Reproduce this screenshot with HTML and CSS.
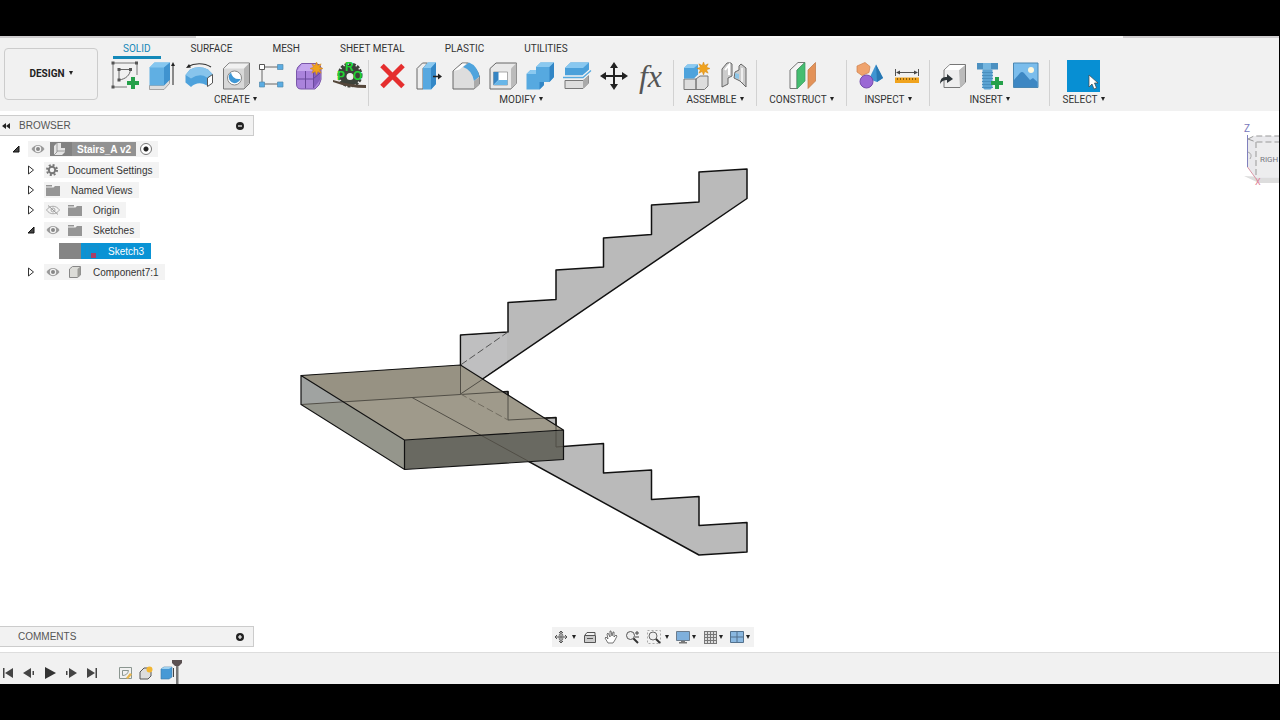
FILE: index.html
```html
<!DOCTYPE html>
<html lang="en">
<head>
<meta charset="utf-8">
<meta name="viewport" content="width=device-width, initial-scale=1">
<title>Stairs_A v2</title>
<link rel="stylesheet" href="styles.css">
</head>
<body>
<svg class="defs" aria-hidden="true">
  <defs>
    <symbol id="star" viewBox="0 0 14 14"><path d="M7 0l1.4 3.7L12 2l-1.7 3.6L14 7l-3.700 1.400L12 12l-3.600-1.700L7 14l-1.400-3.700L2 12l1.700-3.600L0 7l3.700-1.400L2 2l3.600 1.700z" fill="#f0a21c" stroke="#cf8310" stroke-width=".5"/></symbol>
    <symbol id="plus" viewBox="0 0 12 12"><path d="M4 0h4v4h4v4H8v4H4V8H0V4h4z" fill="#25a04a"/></symbol>
    <symbol id="eye" viewBox="0 0 14 10"><path d="M.5 5C4-.5 10-.5 13.500 5 10 10.500 4 10.500.500 5z" fill="#999"/><circle cx="7" cy="5" r="3.200" fill="#f3f3f3"/><circle cx="7" cy="5" r="2" fill="#888"/></symbol>
    <symbol id="folder" viewBox="0 0 14 12"><path d="M0 1h6v1.500H0zM0 3.500h7.500l1.500-1.500h5V12H0z" fill="#969696"/></symbol>
    <symbol id="closed" viewBox="0 0 8 10"><path d="M1.500 1v8L6.500 5z" fill="#fff" stroke="#333"/></symbol>
    <symbol id="open" viewBox="0 0 8 8"><path d="M7 1v6H1z" fill="#444" stroke="#111"/></symbol>
  </defs>
</svg>
<div class="app">
  <div class="title-edge"><span class="edge-left"></span><span class="edge-right"></span></div>
  <header class="ribbon">
    <button class="workspace" type="button">DESIGN <i class="caret"></i></button>
    <div class="ribbon-body">
      <nav class="tabs" aria-label="Toolbar tabs">
        <button class="tab active" type="button">SOLID</button>
        <button class="tab" type="button">SURFACE</button>
        <button class="tab" type="button">MESH</button>
        <button class="tab" type="button">SHEET METAL</button>
        <button class="tab" type="button">PLASTIC</button>
        <button class="tab" type="button">UTILITIES</button>
      </nav>
      <div class="groups">
        <section class="group">
          <div class="tools">
            <button class="tool" type="button" aria-label="Create sketch"><svg class="icon" viewBox="0 0 32 32"><path d="M4 3h24v12M4 3v24h14" fill="none" stroke="#777"/><path d="M10 9.500h11.500C21 15 17 19 10 20z" fill="none" stroke="#666"/><g fill="#555"><path d="M2.500 1.500h3v3h-3zM26 1.500h3v3h-3zM2.500 25.500h3v3h-3zM8.500 8h3v3h-3zM20 8h3v3h-3zM8.500 18.500h3v3h-3z"/></g><use href="#plus" x="18" y="17" width="12" height="12"/></svg></button>
            <button class="tool" type="button" aria-label="Extrude"><svg class="icon" viewBox="0 0 32 32"><path d="M3.500 25.500h14l6-6v4l-5.500 6H3.500z" fill="#ddd" stroke="#888" stroke-width=".7"/><path d="M3.500 7.500l5-5H24v17l-6 6H3.500z" fill="#60afe3"/><path d="M3.500 7.500l5-5H24l-6 5z" fill="#85c7f0"/><path d="M18 7.500l6-5v17l-6 6z" fill="#3f93cf"/><path d="M27 5v20" stroke="#222"/><path d="M27 2l2 4h-4z" fill="#222"/></svg></button>
            <button class="tool" type="button" aria-label="Revolve"><svg class="icon" viewBox="0 0 32 32"><path d="M5 6.500C11 3 21 2.500 28 7" fill="none" stroke="#333" stroke-width="1.200"/><path d="M3 8l3-4 2 3.500z" fill="#222"/><path d="M2.500 15L7 9.500q9-4.500 18 0l5 5-6 5v6q-9-5-16 1.500l-5.500-4.500z" fill="#4ea2dc"/><path d="M2.500 15L7 9.500q9-4.500 18 0l5 5-6 3q-7-5-16 1z" fill="#87c4ec"/><path d="M24.500 18l5-3.500v8.500l-5 3.500z" fill="#fff" stroke="#555"/></svg></button>
            <button class="tool" type="button" aria-label="Hole"><svg class="icon" viewBox="0 0 32 32"><path d="M3.500 8.500L9 3h20.500v20.500L24 29H3.500z" fill="#d8d8d8" stroke="#777"/><path d="M4 8.500L9 3.500h20L24 8.500z" fill="#f1f1f1"/><path d="M24 8.500l5-5V23l-5 5.500z" fill="#b5b5b5"/><circle cx="14.500" cy="18" r="7" fill="#fff" stroke="#888"/><path d="M11 12.500a6 6 0 1 0 9.500 6.500q-8 1-9.500-6.500z" fill="#3f98d6"/></svg></button>
            <button class="tool" type="button" aria-label="Pattern"><svg class="icon" viewBox="0 0 32 32"><path d="M5 7h18M5 7v17h18" fill="none" stroke="#666"/><path d="M2.500 4.500h5v5h-5z" fill="#fff" stroke="#555"/><path d="M20.500 4.500h5.500v5h-5.500zM2.500 22h5v5h-5zM20.500 22h5.500v5h-5.500z" fill="#5bace2" stroke="#5289ad" stroke-width=".7"/></svg></button>
            <button class="tool" type="button" aria-label="Create form"><svg class="icon" viewBox="0 0 32 32"><path d="M2.500 11q0-4 5-7.500H22q5 1 5 4v12q-1 6-6 9.500H7q-4.500 0-4.500-5z" fill="#aa83dc" stroke="#7a57aa"/><path d="M3 11l5-7h14l-4 7z" fill="#c6a7ee"/><path d="M20 11l6-5v14l-6 8z" fill="#865fbf"/><path d="M3 19h16l7-6M11.500 11v17.500M19.500 11v17" fill="none" stroke="#69489b"/><use href="#star" x="16" y="2" width="13" height="13"/></svg></button>
            <button class="tool" type="button" aria-label="Nesting"><svg class="icon" viewBox="0 0 32 32"><circle cx="19" cy="15" r="10.500" fill="#3d423b" stroke="#3d423b" stroke-width="4" stroke-dasharray="2.700 1.300"/><circle cx="19" cy="16.500" r="3.500" fill="#eee"/><path d="M2 20q16 5 33 5v3Q18 28 2 22z" fill="#54463a"/><g class="saw-text"><text x="6" y="20">P</text><text x="14" y="11">R</text><text x="22" y="20">O</text></g></svg></button>
          </div>
          <button class="group-label" type="button">CREATE <i class="caret"></i></button>
        </section>
        <section class="group">
          <div class="tools">
            <button class="tool" type="button" aria-label="Delete"><svg class="icon" viewBox="0 0 32 32"><path d="M6 5.500l21 21M27 5.500l-21 21" stroke="#e52e2e" stroke-width="5"/></svg></button>
            <button class="tool" type="button" aria-label="Press pull"><svg class="icon" viewBox="0 0 32 32"><path d="M4 8.500L9.500 3h5L10 8.500V29H4z" fill="#eee" stroke="#666"/><path d="M10 8l5-5.500h8V24l-5 5.500h-8z" fill="#57a8e0"/><path d="M10 8l5-5.500h8L18 8z" fill="#8bc9f0"/><path d="M18 8l5-5.500V24l-5 5.500z" fill="#3488c7"/><path d="M20 16.500h6" stroke="#222" stroke-width="1.500"/><path d="M29 16.500l-4-3v6z" fill="#222"/></svg></button>
            <button class="tool" type="button" aria-label="Fillet"><svg class="icon" viewBox="0 0 32 32"><path d="M3 11l9-8h6q9 4 11.500 14v7L24 29H3z" fill="#ddd" stroke="#666"/><path d="M3.500 11l9-7.500h4l-7 6z" fill="#fff"/><path d="M13 7l6-4.500q8 3 10.500 14L24 21Q22 10 13 7z" fill="#4fa4dd"/><path d="M24 21l5.500-4v7L24 29z" fill="#aaa"/></svg></button>
            <button class="tool" type="button" aria-label="Shell"><svg class="icon" viewBox="0 0 32 32"><path d="M3 8.500L9 3h20.500v20L24 29H3z" fill="#e9e9e9" stroke="#666"/><path d="M24 8.500L29.500 3v20L24 29z" fill="#bbb"/><path d="M6.500 12h14v13h-14z" fill="#fff" stroke="#888" stroke-width=".7"/><path d="M6.500 12h5v8l-5 5z" fill="#3685c3"/><path d="M11.500 20h9v5h-14z" fill="#68b6e8"/></svg></button>
            <button class="tool" type="button" aria-label="Combine"><svg class="icon" viewBox="0 0 32 32"><path d="M2.500 14l4-4H12V7l4.500-4.500H30V17l-4.500 5H20v3l-4.500 4.500h-13z" fill="#56a9e0"/><path d="M2.500 14l4-4H12v4zM12 7l4.500-4.500H30L25.500 7z" fill="#8ac9f0"/><path d="M25.500 7L30 2.500V17l-4.500 5zM15.500 22H20v3l-4.500 4.500z" fill="#3286c5"/></svg></button>
            <button class="tool" type="button" aria-label="Split body"><svg class="icon" viewBox="0 0 32 32"><path d="M4 8l5.500-5.500H28V10l-6 5.500H4z" fill="#4ba0da"/><path d="M4 8l5.500-5.500H28L22 8z" fill="#89c8f0"/><path d="M4 20.500h18l5.500-5V23L22 28.500H4z" fill="#ddd" stroke="#777"/><path d="M22 20.500l5.500-5V23L22 28.500z" fill="#aaa"/><path d="M2 17.500h20l8-7" fill="none" stroke="#f1f1f1" stroke-width="4"/><path d="M2 17.500h20l8-7" fill="none" stroke="#55a9df" stroke-width="1.300"/></svg></button>
            <button class="tool" type="button" aria-label="Move"><svg class="icon" viewBox="0 0 32 32"><path d="M16 5v22M5 16h22" stroke="#222" stroke-width="2"/><path d="M16 2l4 6h-8zM16 30l4-6h-8zM2 16l6-4v8zM30 16l-6-4v8z" fill="#222"/></svg></button>
            <button class="tool fx" type="button" aria-label="Change parameters">fx</button>
          </div>
          <button class="group-label" type="button">MODIFY <i class="caret"></i></button>
        </section>
        <section class="group">
          <div class="tools">
            <button class="tool" type="button" aria-label="New component"><svg class="icon" viewBox="0 0 32 32"><path d="M3 19h12v10.500H3zM15 19l4-3h8v10l-3.500 3.500H15z" fill="#ddd" stroke="#777"/><path d="M3 8l3.500-3.500H17v10L13 18.500H3z" fill="#4ea3dc"/><path d="M3 8l3.500-3.500H17L13 8z" fill="#8bcaf1"/><use href="#star" x="16" y="2" width="13" height="13"/></svg></button>
            <button class="tool" type="button" aria-label="Joint"><svg class="icon" viewBox="0 0 32 32"><path d="M4 27V9l5-6q4-1 5 1v12l-4 2v6z" fill="#ccc" stroke="#666"/><path d="M7 10l4-5v10" fill="none" stroke="#fff" stroke-width="2"/><path d="M28 27V8l-5-4-2 2v4l-4 2-1 6 6 3z" fill="#ccc" stroke="#666"/><path d="M17 13l4 1v5l-4-1z" fill="#8ec6e7"/><path d="M24 8v14" stroke="#eee" stroke-width="2"/></svg></button>
          </div>
          <button class="group-label" type="button">ASSEMBLE <i class="caret"></i></button>
        </section>
        <section class="group construct">
          <div class="tools">
            <button class="tool" type="button" aria-label="Offset plane"><svg class="icon" viewBox="0 0 32 32"><path d="M4 10l8-7.500h7l-8 7.500v18.500H4z" fill="#f4f4f4" stroke="#777"/><path d="M11 10l8-7.500V21l-8 8z" fill="#45bd70" stroke="#3b9c5e" stroke-width=".7"/><path d="M22 10l7.500-7.500V21L22 28.500z" fill="#e39258" stroke="#bf7744" stroke-width=".7"/></svg></button>
          </div>
          <button class="group-label" type="button">CONSTRUCT <i class="caret"></i></button>
        </section>
        <section class="group">
          <div class="tools">
            <button class="tool" type="button" aria-label="Interference"><svg class="icon" viewBox="0 0 32 32"><path d="M3 6l8-3.500 5 4-1 6-7 3L3 12z" fill="#efa36d" stroke="#cd7f4b" stroke-width=".7"/><path d="M22 4.500L29 18l-6 4-8-3z" fill="#3f94d1"/><path d="M22 4.500L29 18l-6 4z" fill="#2877b2"/><circle cx="12.500" cy="21.500" r="6.500" fill="#9a68d5" stroke="#744aab"/></svg></button>
            <button class="tool" type="button" aria-label="Measure"><svg class="icon" viewBox="0 0 32 32"><path d="M4.500 9v7M27.500 9v7M6 12.500h20" stroke="#555"/><path d="M5 12.500l4-2v4zM27 12.500l-4-2v4z" fill="#444"/><path d="M4 17.500h24V23H4z" fill="#f0a31d"/><path d="M6.500 18v2M9.500 18v2M12.500 18v2M15.500 18v2M18.500 18v2M21.500 18v2M24.500 18v2" stroke="#8a6010"/></svg></button>
          </div>
          <button class="group-label" type="button">INSPECT <i class="caret"></i></button>
        </section>
        <section class="group">
          <div class="tools">
            <button class="tool" type="button" aria-label="Insert derive"><svg class="icon" viewBox="0 0 32 32"><path d="M7 10l6-5.500h15.500V22L23 27.500H7z" fill="#eee" stroke="#777"/><path d="M22 10l6-5v17l-5 5z" fill="#bbb"/><path d="M7.500 10l5.500-5h15l-6 5z" fill="#fff"/><path d="M3 24q0-8 7-7v-3l6 5-6 4v-3q-5 0-7 4z" fill="#2d3438"/></svg></button>
            <button class="tool" type="button" aria-label="Insert fastener"><svg class="icon" viewBox="0 0 32 32"><path d="M3 3h21v6.500H3z" fill="#4c91c1"/><path d="M9 3h8v6.500H9z" fill="#75b6df"/><path d="M8.500 9.500h10v18l-2 2h-6l-2-2z" fill="#5ca3d2"/><path d="M8 12.500h11M8 15.500h11M8 18.500h11M8 21.500h11M8 24.500h11M8 27.500h11" stroke="#4a8fbe"/><use href="#plus" x="17" y="17" width="12" height="12"/></svg></button>
            <button class="tool" type="button" aria-label="Insert canvas"><svg class="icon" viewBox="0 0 32 32"><path d="M2.500 3h24.500v24.500H2.500z" fill="#7bbdec" stroke="#4a87b2"/><path d="M3 20l6-7q2-2 4 0l6 7 3-2 4.500 4v5H3z" fill="#3d87c3"/><circle cx="20" cy="10" r="3" fill="#fff8dc"/></svg></button>
          </div>
          <button class="group-label" type="button">INSERT <i class="caret"></i></button>
        </section>
        <section class="group select">
          <div class="tools">
            <button class="tool selected" type="button" aria-label="Select"><svg class="icon" viewBox="0 0 32 32"><path d="M21 15v12l3-3 2 5 2.500-1-2-5H30z" fill="#fff" stroke="#444" stroke-width=".7"/></svg></button>
          </div>
          <button class="group-label" type="button">SELECT <i class="caret"></i></button>
        </section>
      </div>
    </div>
  </header>

  <main class="workspace-area">
    <svg class="scene" role="img" aria-label="Staircase sketch with landing">
      <g transform="translate(0 -111)">
        <g fill="#bababa" stroke="#111" stroke-width="1.500" stroke-linejoin="round">
          <path d="M747 169L699 172V202L651.500 205V234.500L603.500 238V267L556 270V299.500L508 302.500V332L460.500 335V394L747 198.500Z"/>
          <path d="M460.500 394L508 391.500V420L556 417.500V447L603.500 443.500V473L651.500 470V499.500L699 496.500V525.500L747 522.500V552L699 555L412 397.500Z"/>
        </g>
        <path d="M461.500 336L507 333V361L483 377.500L461.500 364Z" fill="#bfbfc0"/>
        <path d="M508 332L460.500 365" stroke="#555" stroke-dasharray="7 3" fill="none"/>
        <path d="M301 375.500L460.500 365L563.500 430L404.500 440Z" fill="#9f9a8b"/>
        <path d="M301 375.500L460.500 365V394L345 402.500Z" fill="#979283"/>
        <path d="M301 375.500L404.500 440V469.500L301 404.500Z" fill="#95968c"/>
        <path d="M301 375.500L345 402.500L301 404.500Z" fill="#a0a3a1"/>
        <path d="M404.500 440L563.500 430V459.500L404.500 469.500Z" fill="#696961"/>
        <path d="M301 404.500L508 391.500V420L556 417.500V447L563 446.500M412 397.500L528 461M460.500 365V394L483 379" fill="none" stroke="#514e46"/>
        <path d="M460.500 394L508 420" fill="none" stroke="#716c60" stroke-dasharray="7 3"/>
        <path d="M503 391.800L508 391.500V395M546 418L556 417.500V425" fill="none" stroke="#111"/>
        <path d="M301 375.500L460.500 365L563.500 430V459.500L404.500 469.500L301 404.500ZL404.500 440V469.500M404.500 440L563.500 430" fill="none" stroke="#111" stroke-width="1.200"/>
      </g>
    </svg>
    <svg class="viewcube" viewBox="0 0 40 68" aria-label="View cube">
      <path d="M5 55l15 7h20v-5z" fill="#ddd"/>
      <path d="M9 18l7-3h24v42H17L9 46z" fill="#e9e9ec"/>
      <path d="M17 21h23v35H17z" fill="#ededee"/>
      <path d="M9 18l8 3h23M17 21v35M9 18l6-3h25" fill="none" stroke="#999" stroke-dasharray="6 3"/>
      <path d="M8.500 14v32" stroke="#8080bd"/><path d="M8.500 46l8 11" stroke="#d995a5"/>
      <path d="M9 31q5 2 2 7" fill="none" stroke="#aaa"/>
      <text class="axis-z" x="5" y="11">Z</text><text class="axis-x" x="16" y="64">X</text><text class="face" x="21" y="41">RIGH</text>
    </svg>
    <aside class="browser">
      <div class="panel">
        <button class="panel-collapse" type="button" aria-label="Collapse browser"><svg class="rewind" viewBox="0 0 8 6"><path d="M4 0v6L0 3zM8 0v6L4 3z" fill="#222"/></svg></button>
        <h2 class="panel-title">BROWSER</h2>
        <button class="panel-toggle" type="button" aria-label="Minimise browser"><svg class="dot" viewBox="0 0 8 8"><circle cx="4" cy="4" r="4" fill="#222"/><path d="M2 4h4" stroke="#fff" stroke-width="1.200"/></svg></button>
      </div>
      <ul class="tree">
        <li>
          <div class="row root"><svg class="arrow" viewBox="0 0 8 8"><use href="#open"/></svg>
            <div class="chip"><svg class="eye" viewBox="0 0 14 10"><use href="#eye"/></svg><span class="doc-name"><svg class="doc-icon" viewBox="0 0 22 14"><path d="M0 0h22v14H0z" fill="#828282"/><path d="M4 4l3-3h4v5h4v4l-3 3H4z" fill="#e4e4e4"/><path d="M7 1v9l-3 3M7 9h8" fill="none" stroke="#888" stroke-width=".8"/></svg><b>Stairs_A v2</b></span><input class="activate" type="radio" name="active" checked aria-label="Activate Stairs_A v2"></div>
          </div>
          <ul class="branch">
            <li class="row"><svg class="arrow" viewBox="0 0 8 10"><use href="#closed"/></svg><div class="chip"><svg class="gear" viewBox="0 0 12 12"><circle cx="6" cy="6" r="3.200" fill="none" stroke="#777" stroke-width="2"/><circle cx="6" cy="6" r="5" fill="none" stroke="#777" stroke-width="2" stroke-dasharray="2 1.930"/></svg><span class="name wide">Document Settings</span></div></li>
            <li class="row"><svg class="arrow" viewBox="0 0 8 10"><use href="#closed"/></svg><div class="chip"><svg class="folder" viewBox="0 0 14 12"><use href="#folder"/></svg><span class="name">Named Views</span></div></li>
            <li class="row"><svg class="arrow" viewBox="0 0 8 10"><use href="#closed"/></svg><div class="chip"><svg class="eye" viewBox="0 0 14 10"><path d="M.5 5C4 0 10 0 13.500 5 10 10 4 10 .5 5z" fill="none" stroke="#aaa"/><circle cx="7" cy="5" r="2" fill="none" stroke="#aaa"/><path d="M2 .5l10 9" stroke="#999"/></svg><svg class="folder" viewBox="0 0 14 12"><use href="#folder"/></svg><span class="name">Origin</span></div></li>
            <li>
              <div class="row"><svg class="arrow" viewBox="0 0 8 8"><use href="#open"/></svg><div class="chip"><svg class="eye" viewBox="0 0 14 10"><use href="#eye"/></svg><svg class="folder" viewBox="0 0 14 12"><use href="#folder"/></svg><span class="name">Sketches</span></div></div>
              <ul class="leaf"><li class="row"><div class="chip picked"><span class="swatch"></span><svg class="sketch-icon" viewBox="0 0 22 16"><path d="M4 3h13v10H4zM8 3v10" fill="none" stroke="#1c8cc4"/><path d="M10 10h5v5h-5z" fill="#a93e68"/></svg><span class="name">Sketch3</span></div></li></ul>
            </li>
            <li class="row"><svg class="arrow" viewBox="0 0 8 10"><use href="#closed"/></svg><div class="chip"><svg class="eye" viewBox="0 0 14 10"><use href="#eye"/></svg><svg class="folder" viewBox="0 0 14 14"><path d="M1.500 4l3-2.500h8V10l-3 2.500h-8z" fill="#dcdcd8" stroke="#888"/><path d="M9.500 4l3-2.500V10l-3 2.500z" fill="#9c9c98"/></svg><span class="name">Component7:1</span></div></li>
          </ul>
        </li>
      </ul>
    </aside>
    <div class="bottom">
      <div class="panel">
        <h2 class="panel-title comments">COMMENTS</h2>
        <button class="panel-toggle" type="button" aria-label="Expand comments"><svg class="dot" viewBox="0 0 8 8"><circle cx="4" cy="4" r="4" fill="#222"/><path d="M2 4h4M4 2v4" stroke="#fff" stroke-width="1.200"/></svg></button>
      </div>
      <nav class="navbar" aria-label="View navigation">
        <button class="nav drop" type="button" aria-label="Orbit"><svg class="nav-icon" viewBox="0 0 14 14"><path d="M7 1v12M5 3l2-2 2 2M5 11l2 2 2-2M1 7h12M3 5L1 7l2 2M11 5l2 2-2 2" fill="none" stroke="#555"/><ellipse cx="7" cy="7" rx="2" ry="4" fill="none" stroke="#777"/></svg><i class="caret"></i></button>
        <button class="nav" type="button" aria-label="Look at"><svg class="nav-icon" viewBox="0 0 14 14"><path d="M1.500 5.500h11v7h-11z" fill="#ccc" stroke="#555"/><path d="M2 5l2-2.500h8v2.500M4 8.500h6" fill="none" stroke="#555"/></svg></button>
        <button class="nav" type="button" aria-label="Pan"><svg class="nav-icon" viewBox="0 0 14 14"><path d="M4 13L1 8l1-1 2 2-1-5 1-1 2 4V1h1l1 5 1-4h1v5l2-2 1 1-2 4-2 3z" fill="#fff" stroke="#555" stroke-width=".8"/></svg></button>
        <button class="nav" type="button" aria-label="Zoom"><svg class="nav-icon" viewBox="0 0 14 14"><circle cx="5.500" cy="5.500" r="4" fill="#eee" stroke="#555"/><path d="M8.500 8.500l4.500 4.500" stroke="#333" stroke-width="2"/><path d="M10 3h4M12 1v4M10 7h4" stroke="#444"/></svg></button>
        <button class="nav drop" type="button" aria-label="Fit"><svg class="nav-icon" viewBox="0 0 14 14"><path d="M.5.5h13v13H.5z" fill="none" stroke="#aaa" stroke-dasharray="2 2"/><circle cx="6" cy="6" r="4" fill="#eee" stroke="#666"/><path d="M9 9l4 4" stroke="#333" stroke-width="2"/></svg><i class="caret"></i></button>
        <button class="nav drop" type="button" aria-label="Display settings"><svg class="nav-icon" viewBox="0 0 14 14"><path d="M.5 1.500h13v9H.5z" fill="#7fb0dc" stroke="#6b7c8d"/><path d="M5 11h4v1h2v1.500H3V12h2z" fill="#777"/></svg><i class="caret"></i></button>
        <button class="nav drop" type="button" aria-label="Grid and snaps"><svg class="nav-icon" viewBox="0 0 14 14"><path d="M1 1h12v12H1z" fill="#ddd"/><path d="M1 1.500h13M1 4.500h13M1 7.500h13M1 10.500h13M1 13.500h13M1.500 1v13M4.500 1v13M7.500 1v13M10.500 1v13M13.500 1v13" stroke="#777"/></svg><i class="caret"></i></button>
        <button class="nav drop" type="button" aria-label="Viewports"><svg class="nav-icon" viewBox="0 0 14 14"><path d="M.5 1.500h13v11H.5z" fill="#8ab8e0" stroke="#53718d"/><path d="M7 2v10M1 7h12" stroke="#53718d"/></svg><i class="caret"></i></button>
      </nav>
    </div>
  </main>

  <footer class="timeline">
    <div class="playback">
      <button class="play" type="button" aria-label="Go to start"><svg class="play-icon" viewBox="0 0 12 12"><path d="M1 1h1.500v10H1zM11 1v10L3 6z" fill="#444"/></svg></button>
      <button class="play" type="button" aria-label="Step back"><svg class="play-icon" viewBox="0 0 12 12"><path d="M8 1v10L0 6zM9.500 4H11v4H9.500z" fill="#444"/></svg></button>
      <button class="play" type="button" aria-label="Play"><svg class="play-icon" viewBox="0 0 12 12"><path d="M1 0v12L12 6z" fill="#333"/></svg></button>
      <button class="play" type="button" aria-label="Step forward"><svg class="play-icon" viewBox="0 0 12 12"><path d="M4 1v10l8-5zM1 4h1.500v4H1z" fill="#444"/></svg></button>
      <button class="play" type="button" aria-label="Go to end"><svg class="play-icon" viewBox="0 0 12 12"><path d="M1 1v10l8-5zM9.500 1H11v10H9.500z" fill="#444"/></svg></button>
    </div>
    <div class="features">
      <button class="play" type="button" aria-label="Sketch feature"><svg class="feature-icon" viewBox="0 0 16 16"><path d="M2.500 2.500h12v11h-12zM5.500 5.500h6q-1 5-6 5z" fill="none" stroke="#8b9690"/><path d="M9 13l4-5 2 1.500-4 4.500z" fill="#e8b64e"/></svg></button>
      <button class="play" type="button" aria-label="Component feature"><svg class="feature-icon" viewBox="0 0 16 16"><path d="M2 7l4-4h4l3 4v4l-3 3H2z" fill="#ddd" stroke="#555"/><circle cx="11.500" cy="4.500" r="3" fill="#f2b632"/></svg></button>
      <button class="play" type="button" aria-label="Extrude feature"><svg class="feature-icon" viewBox="0 0 16 16"><path d="M2 4l3-2h8v10l-3 2H2z" fill="#4799d5" stroke="#427ba5" stroke-width=".6"/><path d="M2 4l3-2h8l-3 2z" fill="#9dd0ef"/><path d="M14.500 3v9" stroke="#444"/></svg></button>
      <svg class="marker" viewBox="0 0 12 24"><path d="M1 0h10v3L8 6H4L1 3z" fill="#5a5052"/><path d="M5 6h2.500v18H5z" fill="#777"/></svg>
    </div>
  </footer>
</div>
</body>
</html>
```
FILE: styles.css
```css
* { box-sizing: border-box; }

body {
  margin: 0;
  min-height: 100vh;
  padding: 36px 1px 36px 0;
  display: flex;
  flex-direction: column;
  background: #000;
  color: #333;
  font-family: "Liberation Sans", Arial, sans-serif;
  font-size: 10px;
  overflow-x: hidden;
}

button {
  margin: 0;
  padding: 0;
  border: 0;
  background: none;
  color: inherit;
  font: inherit;
}

ul { margin: 0; padding: 0; list-style: none; }
svg { display: block; flex: none; overflow: visible; }
.defs { position: absolute; width: 0; height: 0; }

.app {
  flex: 1;
  display: flex;
  flex-direction: column;
  background: #fff;
}

.caret {
  display: inline-block;
  flex: none;
  border: 2px solid transparent;
  border-top: 4px solid #222;
  border-bottom: 0;
}

/* Ribbon */
.title-edge {
  display: flex;
  justify-content: space-between;
  height: 2px;
  background: #f8f8f8;
}
.edge-left { width: 196px; background: #cfcdcf; }
.edge-right { width: 156px; background: #cfcdcf; }

.ribbon {
  display: flex;
  align-items: flex-start;
  padding: 0 0 5px 4px;
  background: #f1f1f1;
  font-family: Roboto, "Liberation Sans", sans-serif;
}

.workspace {
  display: flex;
  align-items: center;
  justify-content: center;
  gap: 4px;
  width: 94px;
  height: 52px;
  margin-top: 10px;
  padding-bottom: 2px;
  border: 1px solid #ccc;
  border-radius: 4px;
  color: #222;
  font-weight: 700;
}

.ribbon-body { display: flex; flex-direction: column; gap: 1px; padding-left: 4px; }
.tabs { display: flex; gap: 20px; padding-left: 11px; }
.tab {
  height: 21px;
  padding: 2px 10px 0;
  border-bottom: 3px solid transparent;
}
.tab.active { color: #1587b8; border-bottom-color: #1489b9; }

.groups { display: flex; }
.group {
  display: flex;
  flex-direction: column;
  align-items: center;
  padding: 0 4px;
  border-right: 1px solid #d2d2d2;
}
.group:first-child { padding-right: 3px; }
.construct { min-width: 90px; }
.select { min-width: 67px; border-right: 0; }
.tools { display: flex; }
.tool {
  display: flex;
  align-items: center;
  justify-content: center;
  width: 37px;
  height: 32px;
}
.selected { width: 33px; background: #078fd3; }
.icon { width: 32px; height: 32px; }
.fx {
  color: #555;
  font-family: "Liberation Serif", serif;
  font-size: 32px;
  font-style: italic;
  line-height: 32px;
}
.saw-text { fill: #20d433; font: 700 12px "Liberation Sans", sans-serif; }
.group-label {
  display: flex;
  align-items: center;
  gap: 3px;
  height: 14px;
  white-space: nowrap;
}

/* Canvas area */
.workspace-area {
  position: relative;
  flex: 1;
  display: flex;
  flex-direction: column;
  justify-content: space-between;
  padding: 4px 0 5px;
  overflow: hidden;
}
.scene { position: absolute; inset: 0; width: 100%; height: 100%; }
.viewcube { position: absolute; top: 10px; right: 0; width: 40px; height: 68px; }
.viewcube text { font-family: Roboto, "Liberation Sans", sans-serif; }
.axis-z { fill: #7777bb; font-size: 10px; }
.axis-x { fill: #df8096; font-size: 9px; }
.viewcube .face { fill: #77777f; font-size: 8px; }

.browser, .bottom { position: relative; }

.panel {
  display: flex;
  align-items: center;
  width: 254px;
  height: 21px;
  padding-right: 9px;
  border: 1px solid #ccc;
  border-left: 0;
  background: #f2f2f2;
}
.panel-collapse { width: 19px; padding-left: 2px; }
.rewind { width: 8px; height: 6px; }
.panel-title {
  flex: 1;
  margin: 0;
  color: #555;
  font-size: 10px;
  font-weight: 400;
}
.comments { padding-left: 18px; }
.dot { width: 8px; height: 8px; }

.tree { padding-top: 3px; }
.row { display: flex; align-items: center; height: 20px; padding-left: 27px; }
.root { padding-left: 12px; }
.arrow { width: 8px; height: 10px; margin-right: 9px; }
.root .arrow { margin-right: 8px; }
.branch, .leaf { padding: 1px 0; }
.leaf .row { padding-left: 59px; }
.chip {
  display: flex;
  align-items: center;
  height: 16px;
  padding: 0 6px 0 2px;
  background: #f3f3f3;
  color: #333;
  white-space: nowrap;
}
.eye { width: 14px; height: 10px; }
.root .eye { margin-left: 1px; }
.folder { width: 14px; height: 14px; }
.eye + .folder { margin-left: 8px; }
.gear { width: 12px; height: 12px; }
.name { margin-left: 11px; }
.name.wide { margin-left: 10px; }
.doc-name {
  display: flex;
  align-items: center;
  height: 14px;
  margin-left: 5px;
  padding-right: 5px;
  gap: 5px;
  background: #929292;
  color: #fff;
}
.doc-icon { width: 22px; height: 14px; }
.activate {
  appearance: none;
  width: 12px;
  height: 12px;
  margin: 0 0 0 4px;
  border: 1px solid #777;
  border-radius: 50%;
  background: radial-gradient(circle, #222 0 2px, #fff 3px);
}
.picked { padding: 0 7px 0 0; background: #0a93d5; color: #fff; }
.swatch { width: 22px; height: 16px; background: #858585; }
.sketch-icon { width: 22px; height: 16px; }
.picked .name { margin-left: 5px; }

.bottom { display: flex; align-items: center; }
.navbar {
  display: flex;
  align-items: center;
  justify-content: space-between;
  width: 202px;
  height: 20px;
  margin-left: 298px;
  padding: 0 4px 0 2px;
  background: #f2f2f2;
}
.nav { display: flex; align-items: center; gap: 4px; }
.nav.drop + .drop { gap: 2px; }
.nav-icon { width: 14px; height: 14px; }

/* Timeline */
.timeline {
  display: flex;
  align-items: flex-end;
  height: 32px;
  border-top: 1px solid #ddd;
  background: #f1f1f1;
}
.playback, .features { display: flex; gap: 5px; padding-bottom: 3px; }
.features { position: relative; margin-left: 17px; }
.play {
  display: flex;
  align-items: center;
  justify-content: center;
  width: 16px;
  height: 16px;
}
.play-icon { width: 12px; height: 12px; }
.feature-icon { width: 16px; height: 16px; }
.marker { position: absolute; right: -8px; bottom: 0; width: 12px; height: 24px; }
```
